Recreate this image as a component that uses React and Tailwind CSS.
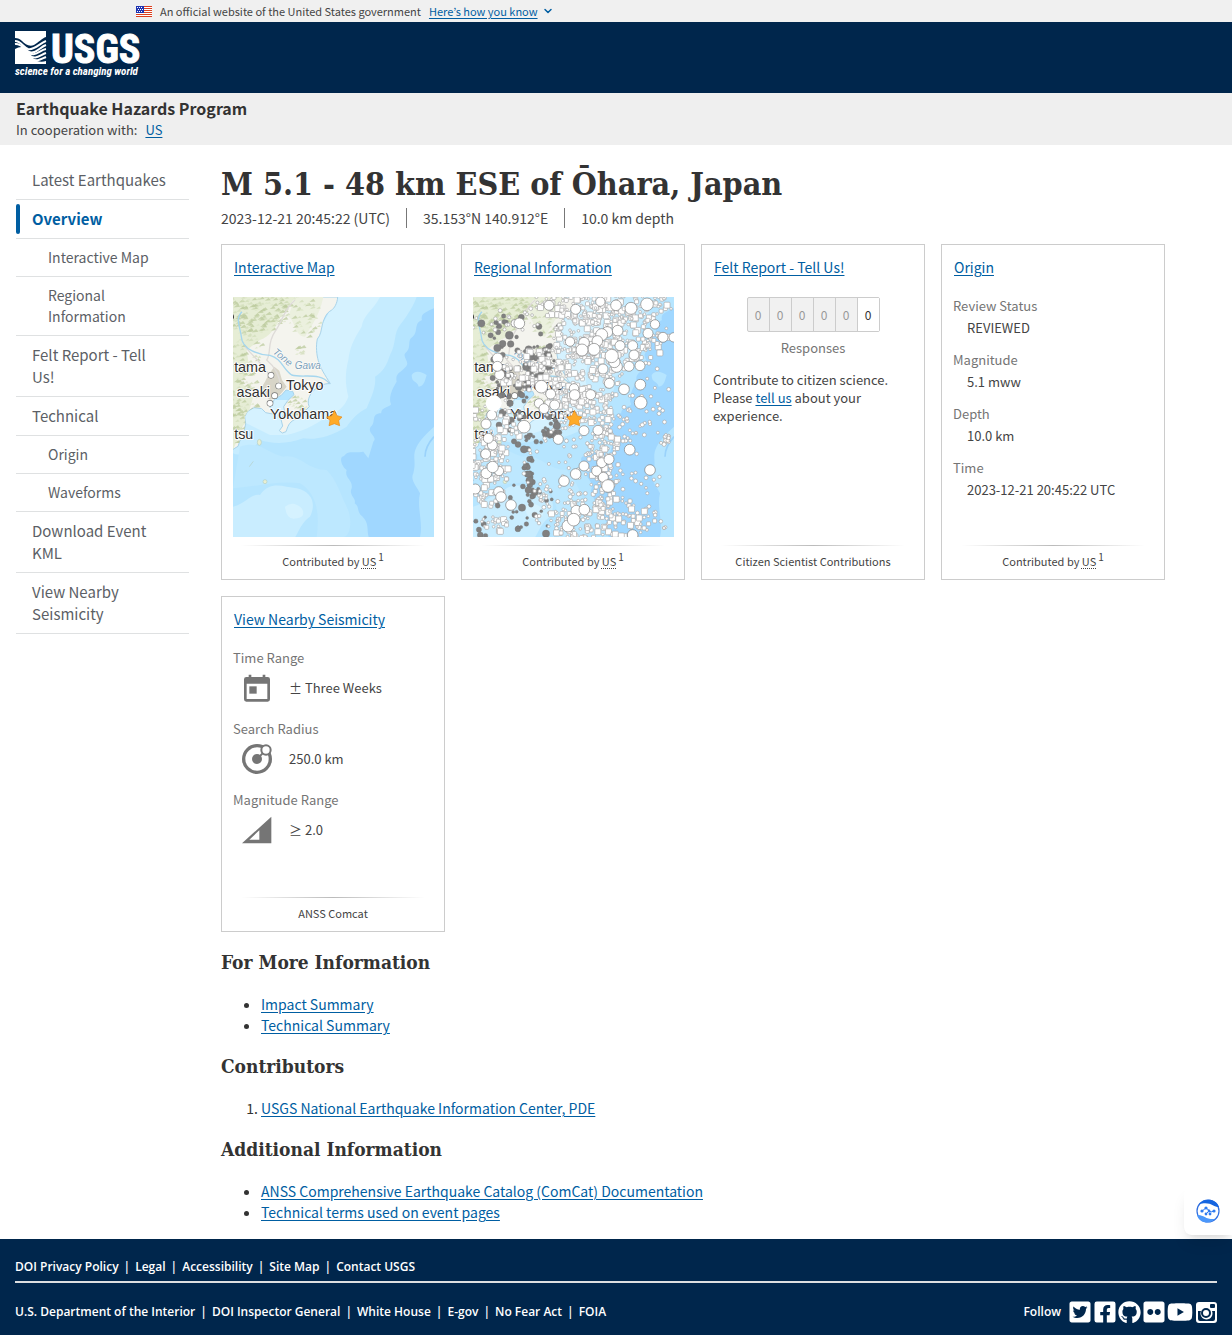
import React from 'react';
import { FaTwitterSquare, FaFacebookSquare, FaGithub, FaFlickr, FaYoutube } from 'react-icons/fa';
import { ChevronDown } from 'lucide-react';

const NAV_ITEMS = [
  { label: 'Latest Earthquakes' },
  { label: 'Overview', active: true },
  { label: 'Interactive Map', sub: true },
  { label: 'Regional Information', sub: true },
  { label: 'Felt Report - Tell Us!' },
  { label: 'Technical' },
  { label: 'Origin', sub: true },
  { label: 'Waveforms', sub: true },
  { label: 'Download Event KML' },
  { label: 'View Nearby Seismicity' }
];

const ORIGIN = [
  ['Review Status', 'REVIEWED'],
  ['Magnitude', '5.1 mww'],
  ['Depth', '10.0 km'],
  ['Time', '2023-12-21 20:45:22 UTC']
];

const FOOTER_TOP = ['DOI Privacy Policy', 'Legal', 'Accessibility', 'Site Map', 'Contact USGS'];
const FOOTER_BOTTOM = ['U.S. Department of the Interior', 'DOI Inspector General', 'White House', 'E-gov', 'No Fear Act', 'FOIA'];

const LINK = 'text-[#005ea2] underline underline-offset-2';

// small seeded generator so the maps look the same on every load
const makeRandom = (seed) => {
  let s = seed;
  return () => {
    s = (s * 16807) % 2147483647;
    return s / 2147483647;
  };
};

const scatter = (seed, clusters) => {
  const rand = makeRandom(seed);
  return clusters.flatMap(([cx, cy, rx, ry, count]) =>
    Array.from({ length: count }, () => {
      const angle = rand() * Math.PI * 2;
      const dist = Math.sqrt(rand());
      return { x: cx + Math.cos(angle) * dist * rx, y: cy + Math.sin(angle) * dist * ry, k: rand() };
    })
  );
};

const LAND = 'M39 171H353C352 190 343 205 334 211C320 218 314 232 308 250C303 270 303 285 292 297C287 320 290 345 295 362C301 385 315 405 331 431C312 429 290 440 276 457C264 472 262 490 268 500C255 512 244 526 225 538C205 548 204 560 198 575L187 579L178 572L188 558L183 538L195 520L191 500L203 482L222 464L218 454L198 450L184 466L164 476L158 490L150 502L158 522L137 518L125 506L102 503L83 514L74 530L77 552L72 574L75 592L60 601L54 619L39 628Z';

const HILLS = scatter(11, [[95, 210, 110, 75, 230], [70, 340, 50, 75, 60], [250, 225, 50, 70, 50], [60, 470, 50, 80, 70], [60, 570, 30, 50, 25], [225, 510, 32, 40, 30], [232, 330, 12, 25, 8]]);

const QUAKES = scatter(77, [
  [440, 200, 200, 60, 190], [455, 290, 175, 90, 230], [360, 400, 140, 110, 200], [350, 490, 110, 65, 90],
  [205, 390, 100, 60, 90], [85, 690, 60, 110, 120], [110, 560, 80, 90, 50], [430, 650, 48, 160, 130],
  [370, 840, 110, 60, 90], [500, 830, 90, 70, 40], [110, 850, 45, 30, 20]
]);

const SMALL_QUAKES = scatter(19, [
  [615, 600, 14, 20, 14], [480, 560, 60, 60, 24], [320, 680, 130, 130, 70], [560, 480, 80, 120, 26],
  [90, 240, 60, 60, 14], [490, 700, 110, 170, 60], [300, 800, 90, 80, 30], [560, 840, 70, 50, 20], [210, 220, 40, 60, 12]
]);

const OLD_QUAKES = scatter(31, [
  [240, 370, 45, 55, 46], [170, 430, 65, 60, 40], [170, 300, 110, 80, 20], [210, 570, 90, 60, 28],
  [205, 710, 18, 70, 24], [200, 800, 90, 90, 26], [270, 570, 30, 20, 12], [70, 860, 30, 30, 6], [265, 350, 14, 35, 14]
]);

const BIG_QUAKES = [
  [267, 196, 15], [347, 208, 15], [421, 185, 14], [468, 196, 16], [513, 205, 18], [561, 193, 19], [165, 250, 12], [178, 250, 16],
  [442, 276, 16], [425, 284, 18], [473, 272, 16], [585, 253, 14], [564, 280, 15], [609, 292, 15], [641, 292, 14], [330, 305, 14],
  [372, 308, 16], [412, 303, 16], [402, 328, 18], [366, 330, 18], [480, 317, 15], [518, 317, 15], [522, 345, 15], [470, 380, 17],
  [463, 366, 17], [455, 348, 20], [507, 379, 15], [540, 377, 15], [429, 387, 15], [448, 430, 15], [492, 448, 16], [541, 434, 16],
  [542, 488, 19], [272, 462, 15], [244, 440, 19], [342, 445, 14], [344, 465, 16], [392, 464, 15], [284, 495, 15], [237, 490, 14],
  [252, 506, 15], [113, 355, 16], [119, 404, 15], [112, 379, 15], [95, 525, 15], [78, 552, 15], [97, 615, 15], [85, 595, 15],
  [77, 642, 15], [192, 560, 19], [295, 598, 15], [372, 572, 15], [414, 571, 15], [509, 629, 16], [570, 690, 16], [117, 693, 14],
  [79, 700, 16], [98, 681, 17], [372, 678, 15], [347, 702, 16], [312, 723, 16], [425, 668, 15], [447, 658, 15], [410, 693, 15],
  [430, 712, 15], [444, 738, 19], [116, 755, 15], [123, 771, 16], [153, 795, 16], [46, 747, 15], [349, 812, 16], [373, 809, 16],
  [324, 858, 18], [341, 839, 19], [518, 885, 16]
];

const OLD_BIG = [
  [64, 250, 11], [148, 286, 12], [128, 311, 10], [152, 312, 10], [112, 324, 11], [184, 232, 9], [92, 286, 8], [192, 628, 11],
  [205, 703, 10], [209, 722, 11], [205, 750, 10], [186, 803, 11], [258, 881, 11], [128, 518, 11], [153, 541, 10], [117, 555, 9],
  [291, 557, 11], [268, 580, 10], [162, 604, 8], [297, 262, 10], [206, 328, 11], [176, 440, 11], [150, 490, 9], [98, 414, 8]
];

const MapBase = () => (
  <>
    <rect x="39" y="171" width="603" height="720" fill="#b6e5ff" />
    <path d="M353 171H590C575 210 555 235 540 255C520 280 530 310 510 345C500 375 490 395 465 410C470 440 450 480 440 505C410 520 395 540 380 560C330 590 290 600 250 595C200 615 150 610 120 600C90 640 60 650 39 640V500H300Z" fill="#c6ecff" />
    <path d="M353 171H480C460 210 430 225 425 260C400 300 390 320 385 360C375 400 375 430 385 470C375 500 350 520 320 530C280 560 240 575 200 585H150L70 545V480H250L280 300Z" fill="#d5f2ff" />
    <path d="M39 800C80 790 90 760 120 765C150 720 190 740 230 745C275 755 290 790 270 830C240 850 230 891 225 891H39Z" fill="#c9edff" />
    <path d="M195 800q25-20 50 5q15 25-15 30q-30 8-35-35Z" fill="#d5f2ff" />
    <path d="M60 620C120 600 140 640 190 650C240 640 260 690 320 690C350 720 360 760 380 800C400 840 390 891 370 891H290C300 820 290 760 240 730C180 720 110 740 39 745Z" fill="#bde8ff" />
    <path d="M642 205C620 215 600 222 606 240C580 250 596 275 578 290C560 300 575 320 560 335C540 350 575 365 556 382C540 400 525 400 530 425C520 440 505 470 512 490C520 500 480 500 484 520C450 520 470 550 452 560C440 580 475 590 460 605L445 655L430 635C400 640 385 630 372 648C355 650 365 680 380 690C372 715 400 720 395 745C385 765 410 775 404 790C420 800 408 815 428 830C448 850 440 870 446 891H600C610 850 590 800 600 760C588 735 570 720 580 700C590 660 575 650 590 620C600 600 620 580 642 560Z" fill="#a0d7ff" />
    <path d="M575 405C585 390 605 395 620 405C615 420 612 440 596 440C590 420 575 430 575 405Z" fill="#b6e5ff" />
    <path d="M615 650q0-30 27-60" stroke="#9ad2fb" strokeWidth="5" fill="none" />
    <path d={LAND} fill="#f4f4ee" stroke="#a9d3ea" strokeWidth="3" />
  </>
);

const MapLand = ({ id }) => (
  <>
    <clipPath id={id}><path d={LAND} /></clipPath>
    <g clipPath={`url(#${id})`}>
      <path d="M39 171H225C210 200 190 210 180 235C165 265 150 290 120 300L80 330L90 400L60 420L100 470L85 520L39 630Z" fill="#e6edd5" />
      <path d="M225 171H310C300 220 280 250 255 290C225 290 225 240 205 230Z" fill="#ebf0de" />
      {HILLS.map((p, i) => (
        <path
          key={i}
          d={`M${p.x} ${p.y}l${5 + p.k * 9} ${-5 - p.k * 6}l${3 + p.k * 4} ${4 + p.k * 5}z`}
          fill={p.k > 0.6 ? '#bccb9e' : p.k > 0.3 ? '#d0dcb8' : '#dbe6c6'}
          opacity="0.75"
        />
      ))}
      <path d="M145 405L163 380L178 392L186 420L200 440L175 470L150 480L120 450L135 425Z" fill="#d8d5c8" />
      <path d="M225 180C190 210 190 240 165 275C140 310 155 340 140 360C165 380 180 410 180 435M75 320C110 360 135 380 150 410" fill="none" stroke="#dedbd8" strokeWidth="4" />
    </g>
    <path d="M66 215C45 235 60 260 64 290C66 330 120 345 150 346C185 355 190 390 215 405C250 415 300 395 328 430" fill="none" stroke="#a5d6ee" strokeWidth="4" />
    <path d="M39 222q6 10 0 16z" fill="#333" />
    <g fill="#e9efd2" stroke="#b5cfc4" strokeWidth="2">
      <ellipse cx="118" cy="607" rx="6" ry="9" />
      <circle cx="135" cy="725" r="6" />
      <path d="M88 680l12-16" />
    </g>
  </>
);

const MapLabels = () => (
  <g fontFamily="'Liberation Sans', Arial, sans-serif" fontSize="43" fill="#303030" stroke="#fff" strokeWidth="5" paintOrder="stroke">
    <g fontSize="30" fontStyle="italic" fill="#7aa0b8" strokeWidth="3">
      <text x="157" y="338" transform="rotate(40 157 338)">Tone</text>
      <text x="224" y="388">Gawa</text>
    </g>
    <text x="138" y="397" textAnchor="end">tama</text>
    <text x="198" y="449">Tokyo</text>
    <text x="150" y="472" textAnchor="end">asaki</text>
    <text x="150" y="536">Yokohama</text>
    <text x="100" y="597" textAnchor="end">tsu</text>
    <g fill="#fff" stroke="#777" strokeWidth="4">
      <circle cx="153" cy="406" r="8" />
      <circle cx="176" cy="438" r="8" />
      <circle cx="164" cy="467" r="8" />
      <circle cx="150" cy="490" r="8" />
    </g>
  </g>
);

const Star = () => (
  <path d="M343 511L351 527L366 531L356 542L359 557L343 551L327 557L330 542L320 531L336 527Z" fill="#ffab28" stroke="#e58a1c" strokeWidth="2" strokeLinejoin="round" />
);

const InteractiveMap = () => (
  <svg viewBox="39 171 603 720" className="block h-60 w-[201px]" role="img" aria-label="Interactive map">
    <MapBase />
    <MapLand id="land-a" />
    <MapLabels />
    <Star />
  </svg>
);

const RegionalMap = () => (
  <svg viewBox="39 171 603 720" className="block h-60 w-[201px]" role="img" aria-label="Regional seismicity map">
    <MapBase />
    <MapLand id="land-b" />
    <MapLabels />
    <g fill="#808080" stroke="#6f6f6f" strokeWidth="1">
      {OLD_QUAKES.map((p, i) => <circle key={i} cx={p.x} cy={p.y} r={4 + p.k * 5} />)}
      {OLD_BIG.map(([x, y, r]) => <circle key={`${x}-${y}`} cx={x} cy={y} r={r} />)}
    </g>
    <g fill="#fff" stroke="#a8a8a8" strokeWidth="2">
      {SMALL_QUAKES.map((p, i) => <circle key={i} cx={p.x} cy={p.y} r={4 + p.k * 2} />)}
      {QUAKES.map((p, i) => {
        if (p.k > 0.78) return <rect key={i} x={p.x - 9} y={p.y - 9} width="18" height="18" rx="3" />;
        if (p.k > 0.45) return <rect key={i} x={p.x - 6} y={p.y - 6} width="12" height="12" rx="3" />;
        return <circle key={i} cx={p.x} cy={p.y} r="4" />;
      })}
    </g>
    <g fill="#fff" stroke="#7d7d7d" strokeWidth="2">
      {BIG_QUAKES.map(([x, y, r]) => <circle key={`${x}-${y}`} cx={x} cy={y} r={r} />)}
    </g>
    <circle cx="101" cy="490" r="24" fill="#fff" />
    <Star />
  </svg>
);

const Flag = () => (
  <svg viewBox="0 0 16 11" className="h-[11px] w-4" shapeRendering="crispEdges" aria-hidden="true">
    <path fill="#fff" d="M0 0h16v11H0z" />
    <path fill="#db3e1f" d="M0 0h16v1H0zM0 2h16v1H0zM0 4h16v1H0zM0 6h16v1H0zM0 8h16v1H0zM0 10h16v1H0z" />
    <path fill="#1e33b1" d="M0 0h8v7H0z" />
    <path fill="#fff" d="M1 1h1v1H1zM3 1h1v1H3zM5 1h1v1H5zM2 3h1v1H2zM4 3h1v1H4zM6 3h1v1H6zM1 5h1v1H1zM3 5h1v1H3zM5 5h1v1H5z" />
  </svg>
);

const Logo = () => (
  <svg viewBox="0 0 128 50" className="block h-[50px] w-32 overflow-visible" aria-label="USGS science for a changing world">
    <path d="M0 1h31v6c-4 1-8 6-12 8c-5 2-9-1-12-4c-2-2-4-3-7-3z" fill="#fff" />
    <path d="M0 19c4-2 8-3 11 0c4 4 6 10 11 12c3 1 6 1 9 0v3H0z" fill="#fff" />
    <g fill="none" stroke="#fff" strokeWidth="2">
      <path d="M0 11c6 0 8 6 13 8c6 2 12-6 18-8" />
      <path d="M0 14c6-1 9 5 14 8c6 3 11-5 17-7" />
      <path d="M12 21c7 8 12-1 19-2" />
      <path d="M14 25c6 6 11 0 17-2" />
      <path d="M17 29c5 3 9 0 14-2" />
    </g>
    <text x="36" y="33" fill="#fff" stroke="#fff" strokeWidth="1" fontFamily="'Roboto Condensed', 'Open Sans Condensed', 'Noto Sans CJK JP', sans-serif" fontWeight="700" fontSize="40">USGS</text>
    <text x="0" y="45" fill="#fff" fontFamily="'Roboto Condensed', 'Open Sans Condensed', 'Noto Sans CJK JP', sans-serif" fontWeight="700" fontStyle="italic" fontSize="11">science for a changing world</text>
  </svg>
);

const CalendarIcon = () => (
  <svg viewBox="65 247 96 96" className="size-8" fill="#757575" aria-hidden="true">
    <path fillRule="evenodd" d="M88 255h8v7h34v-7h8v7h7q7 0 7 7v60q0 7-7 7H81q-7 0-7-7v-60q0-7 7-7h7zM82 282v46h62v-46z" />
    <path d="M90 290h22v22H90z" />
  </svg>
);

const RadiusIcon = () => (
  <svg viewBox="65 460 96 96" className="size-8" aria-hidden="true">
    <circle cx="113" cy="508" r="40" fill="none" stroke="#757575" strokeWidth="10" />
    <circle cx="113" cy="508" r="15" fill="#757575" />
    <path d="M113 508L132 489" stroke="#757575" strokeWidth="6" />
    <circle cx="140" cy="481" r="14" fill="#fff" stroke="#757575" strokeWidth="6" />
  </svg>
);

const MagnitudeIcon = () => (
  <svg viewBox="65 673 96 96" className="size-8" aria-hidden="true">
    <path fill="#757575" fillRule="evenodd" d="M68 761L156 681V761ZM90 750H120V722Z" />
  </svg>
);

const InstagramIcon = () => (
  <svg viewBox="0 0 21 21" className="size-[21px]" aria-hidden="true">
    <rect width="21" height="21" rx="3" fill="currentColor" />
    <path d="M2 9h3a6 6 0 1 0 11 0h3v8q0 2-2 2H4q-2 0-2-2z" fill="#00264c" />
    <rect x="14" y="2" width="5" height="4" rx="1" fill="#00264c" />
    <circle cx="10" cy="11" r="4" fill="none" stroke="#00264c" strokeWidth="2" />
  </svg>
);

const WidgetIcon = () => (
  <svg viewBox="0 0 24 24" className="size-6" fill="none" aria-hidden="true">
    <circle cx="12" cy="12" r="11" stroke="#2f6fe0" strokeWidth="1.2" />
    <path d="M3 5C8-1 20-1 23 8C17 8 15 2 3 5Z" fill="#1565e0" />
    <path d="M1 16c6-1 9 5 18 4C13 26 3 24 1 16Z" fill="#4b97fa" />
    <path d="M6 12l4-3l5 4l3-1M10 15l3-3" stroke="#2f7bf0" />
    <g fill="#2f7bf0">
      <circle cx="6" cy="12" r="1.6" />
      <circle cx="10" cy="9" r="1.6" />
      <circle cx="13" cy="12" r="1.4" />
      <circle cx="18" cy="12" r="1.6" />
      <circle cx="10" cy="15" r="1.4" />
      <circle cx="14" cy="15" r="1.4" />
    </g>
  </svg>
);

const Contributor = () => (
  <>
    Contributed by <abbr className="underline decoration-dotted underline-offset-2">US</abbr>
    <sup className="ml-0.5 text-[10px]">1</sup>
  </>
);

const Card = ({ title, footer, children }) => (
  <section className="flex h-[336px] w-56 flex-col border border-[#ccc] px-[11px]">
    <h2 className="mt-3 mb-[19px] pl-px text-[14px] leading-[21px]">
      <a href="#" className={LINK}>{title}</a>
    </h2>
    <div className="h-60">{children}</div>
    <div className="mx-2 mt-2 h-px bg-linear-to-r from-transparent via-[#bbb] to-transparent"></div>
    <p className="mt-[5px] text-center text-[11px] leading-5">{footer}</p>
  </section>
);

const RangeRow = ({ label, icon: Icon, value }) => (
  <div>
    <dt className="leading-[18px] text-[#757575]">{label}</dt>
    <dd className="flex h-[42px] items-center gap-4 pl-2">
      <Icon />
      {value}
    </dd>
  </div>
);

const FooterLinks = ({ items }) => (
  <ul className="flex flex-wrap text-[12px] leading-4 font-semibold">
    {items.map((item, i) => (
      <li key={item} className={i > 0 ? "before:mx-[5px] before:content-['|']" : ''}>
        <a href="#">{item}</a>
      </li>
    ))}
  </ul>
);

const SectionTitle = ({ children }) => (
  <h2 className="mt-5 mb-[22px] font-['DejaVu_Serif_Condensed','DejaVu_Serif',serif] text-[19px] leading-5 font-bold text-[#333]">{children}</h2>
);

const App = () => {
  return (
    <div className="min-h-screen bg-white font-['Noto_Sans_CJK_JP',sans-serif] text-[#333]">
      <div className="bg-[#f0f0f0]">
        <div className="mx-auto flex h-[22px] max-w-[960px] items-center gap-2 text-[11px] text-[#444]">
          <Flag />
          <p>An official website of the United States government</p>
          <button type="button" className="flex items-center gap-1 text-[#005ea2]">
            <span className="underline underline-offset-2">Here’s how you know</span>
            <ChevronDown size={12} strokeWidth={3} />
          </button>
        </div>
      </div>

      <header>
        <div className="h-[71px] bg-[#00264c] px-[15px] pt-2">
          <a href="#" className="inline-block"><Logo /></a>
        </div>
        <div className="bg-[#efefef] px-4 pt-1 pb-1">
          <p className="text-[16px] leading-[22px] font-bold">Earthquake Hazards Program</p>
          <p className="flex gap-2 text-[13px] leading-[22px] text-[#444]">
            In cooperation with: <a href="#" className={LINK}>US</a>
          </p>
        </div>
      </header>

      <div className="flex gap-8 px-4 pt-4 pb-4">
        <nav className="w-[173px] shrink-0 text-[#5c5f66]">
          <ul>
            {NAV_ITEMS.map((item) => (
              <li key={item.label} className="relative border-b border-[#dfe1e2]">
                {item.active && <span className="absolute top-1 bottom-1 left-0 w-1 rounded-full bg-[#005ea2]"></span>}
                <a
                  href="#"
                  className={`block py-2 pr-5 ${item.sub ? 'pl-8 text-[14px] leading-[21px]' : 'pl-4 text-[15px] leading-[22px]'} ${item.active ? 'font-bold text-[#005ea2]' : ''}`}
                >
                  {item.label}
                </a>
              </li>
            ))}
          </ul>
        </nav>

        <main className="min-w-0 flex-1">
          <h1 className="font-['DejaVu_Serif_Condensed','DejaVu_Serif',serif] text-[32px] leading-[47px] font-bold">M 5.1 - 48 km ESE of Ōhara, Japan</h1>
          <ul className="mb-4 flex text-[14px] leading-5 text-[#444]">
            <li className="border-r border-[#777] pr-4">2023-12-21 20:45:22 (UTC)</li>
            <li className="border-r border-[#777] px-4">35.153°N 140.912°E</li>
            <li className="pl-4">10.0 km depth</li>
          </ul>

          <div className="flex flex-wrap gap-4 text-[13px] text-[#444]">
            <Card title="Interactive Map" footer={<Contributor />}>
              <InteractiveMap />
            </Card>
            <Card title="Regional Information" footer={<Contributor />}>
              <RegionalMap />
            </Card>
            <Card title="Felt Report - Tell Us!" footer="Citizen Scientist Contributions">
              <ol className="mx-auto flex h-[35px] w-[133px] rounded-xs border border-[#ccc] bg-[#f1f1f1] text-center text-[12px] leading-[33px] text-[#999]">
                {[0, 0, 0, 0, 0].map((n, i) => <li key={i} className="flex-1 border-r border-[#ccc]">{n}</li>)}
                <li className="flex-1 bg-white text-[#333]">0</li>
              </ol>
              <p className="mt-[7px] text-center leading-[18px] text-[#757575]">Responses</p>
              <p className="mt-3.5 leading-[18px]">
                Contribute to citizen science. Please <a href="#" className={LINK}>tell us</a> about your experience.
              </p>
            </Card>
            <Card title="Origin" footer={<Contributor />}>
              <dl className="flex flex-col gap-2.5">
                {ORIGIN.map(([label, value]) => (
                  <div key={label}>
                    <dt className="leading-[18px] text-[#757575]">{label}</dt>
                    <dd className="pl-3.5 leading-[26px]">{value}</dd>
                  </div>
                ))}
              </dl>
            </Card>
            <Card title="View Nearby Seismicity" footer="ANSS Comcat">
              <dl className="flex flex-col gap-[11px]">
                <RangeRow label="Time Range" icon={CalendarIcon} value="± Three Weeks" />
                <RangeRow label="Search Radius" icon={RadiusIcon} value="250.0 km" />
                <RangeRow label="Magnitude Range" icon={MagnitudeIcon} value="≥ 2.0" />
              </dl>
            </Card>
          </div>

          <SectionTitle>For More Information</SectionTitle>
          <ul className="list-disc pl-10 text-[14px] leading-[21px]">
            <li><a href="#" className={LINK}>Impact Summary</a></li>
            <li><a href="#" className={LINK}>Technical Summary</a></li>
          </ul>

          <SectionTitle>Contributors</SectionTitle>
          <ol className="list-decimal pl-10 text-[14px] leading-[21px]">
            <li><a href="#" className={LINK}>USGS National Earthquake Information Center, PDE</a></li>
          </ol>

          <SectionTitle>Additional Information</SectionTitle>
          <ul className="list-disc pl-10 text-[14px] leading-[21px]">
            <li><a href="#" className={LINK}>ANSS Comprehensive Earthquake Catalog (ComCat) Documentation</a></li>
            <li><a href="#" className={LINK}>Technical terms used on event pages</a></li>
          </ul>
        </main>
      </div>

      <footer className="bg-[#00264c] px-[15px] pt-5 pb-3 font-['Open_Sans',sans-serif] text-white">
        <FooterLinks items={FOOTER_TOP} />
        <div className="mt-1.5 mb-4 h-0.5 bg-[#dcdee0]"></div>
        <div className="flex flex-wrap items-center justify-between">
          <FooterLinks items={FOOTER_BOTTOM} />
          <div className="flex items-center gap-px text-[12px] font-semibold">
            <span className="mr-1.5">Follow</span>
            <a href="#" aria-label="Twitter"><FaTwitterSquare size={24} /></a>
            <a href="#" aria-label="Facebook"><FaFacebookSquare size={24} /></a>
            <a href="#" aria-label="GitHub"><FaGithub size={23} /></a>
            <a href="#" aria-label="Flickr"><FaFlickr size={24} /></a>
            <a href="#" aria-label="YouTube"><FaYoutube size={26} /></a>
            <a href="#" aria-label="Instagram" className="ml-0.5"><InstagramIcon /></a>
          </div>
        </div>
      </footer>

      <button type="button" aria-label="Open assistant" className="fixed right-0 bottom-[100px] flex size-12 items-center justify-center rounded-l-lg bg-white shadow-lg">
        <WidgetIcon />
      </button>
    </div>
  );
};

export default App;
